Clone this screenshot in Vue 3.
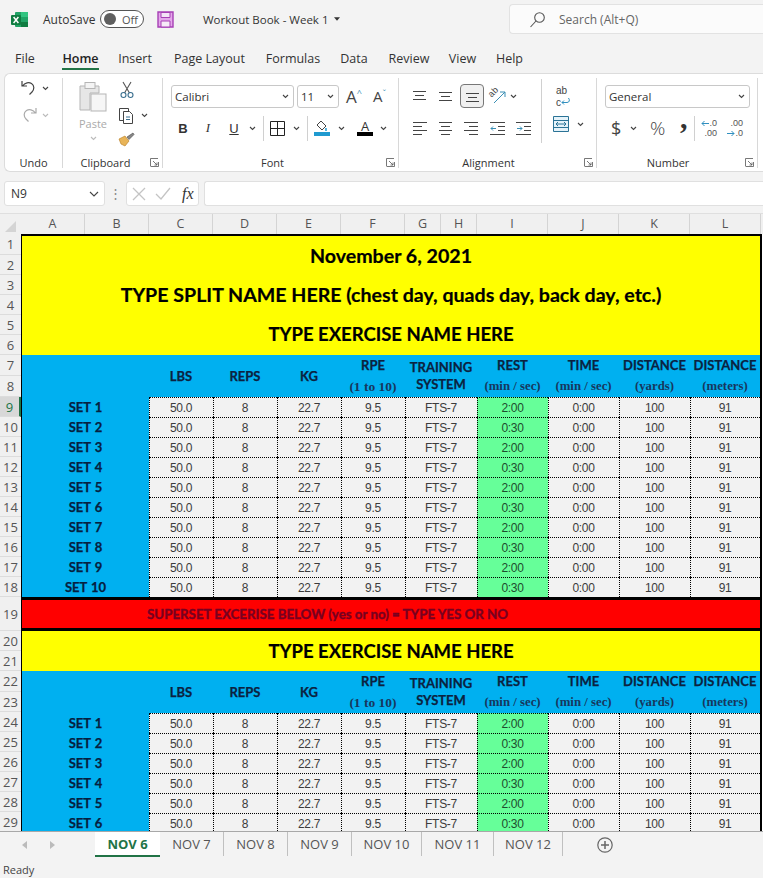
<script setup>
const menus = [
  { t: 'File', w: 46 }, { t: 'Home', w: 65, on: true }, { t: 'Insert', w: 44 }, { t: 'Page Layout', w: 105 },
  { t: 'Formulas', w: 62 }, { t: 'Data', w: 60 }, { t: 'Review', w: 50 }, { t: 'View', w: 57 }, { t: 'Help', w: 37 }
]
const cols = [
  { l: 'A', w: 64 }, { l: 'B', w: 64 }, { l: 'C', w: 64 }, { l: 'D', w: 64 }, { l: 'E', w: 64 }, { l: 'F', w: 64 },
  { l: 'G', w: 36 }, { l: 'H', w: 36 }, { l: 'I', w: 71 }, { l: 'J', w: 71 }, { l: 'K', w: 71 }, { l: 'L', w: 71 }
]
const rowHeights = [21, 20, 20, 20, 20, 20, 21, 21, 20, 20, 20, 20, 20, 20, 20, 20, 20, 20, 34, 20, 20, 21, 20, 20, 20, 20, 20, 20, 20]
const rowNums = rowHeights.map((h, i) => ({ n: i + 1, h }))
const heads = [
  { a: 'LBS' }, { a: 'REPS' }, { a: 'KG' }, { a: 'RPE', b: '(1 to 10)', wide: true }, { a: 'TRAINING', c: 'SYSTEM' },
  { a: 'REST', b: '(min / sec)' }, { a: 'TIME', b: '(min / sec)' }, { a: 'DISTANCE', b: '(yards)' }, { a: 'DISTANCE', b: '(meters)' }
]
const setsA = Array.from({ length: 10 }, (_, i) => i + 1)
const setsB = Array.from({ length: 6 }, (_, i) => i + 1)
const rest = (n) => (n % 2 ? '2:00' : '0:30')
const tabs = [
  { t: 'NOV 6', w: 65, on: true }, { t: 'NOV 7', w: 64 }, { t: 'NOV 8', w: 64 }, { t: 'NOV 9', w: 64 },
  { t: 'NOV 10', w: 70 }, { t: 'NOV 11', w: 72 }, { t: 'NOV 12', w: 69 }
]
</script>

<template>
  <div class="app">
    <header class="title">
      <svg class="xl" width="17" height="17" viewBox="0 0 17 17">
        <rect x="4" y="1" width="13" height="15" rx="1" fill="#21a366" />
        <rect x="10" y="1" width="7" height="5" fill="#33c481" />
        <rect x="10" y="11" width="7" height="5" fill="#107c41" />
        <rect x="0" y="4" width="10" height="10" rx="1" fill="#107c41" />
        <path d="M2.6 6l4.8 6M7.4 6l-4.8 6" stroke="#fff" stroke-width="1.5" />
      </svg>
      <span class="autosave">AutoSave</span>
      <span class="toggle"><i></i><b>Off</b></span>
      <svg class="save" width="17" height="17" viewBox="0 0 17 17">
        <path d="M1 1h15v15H1z" fill="#e4a7ea" stroke="#a63fb5" stroke-width="1.4" />
        <path d="M4 1.5h9v5H4z" fill="#f4e3f6" stroke="#a63fb5" />
        <path d="M4 10h9v6H4z" fill="#f6eaf7" stroke="#a63fb5" />
      </svg>
      <span class="doc">Workout Book - Week 1</span>
      <svg class="doc-caret" width="7" height="4" viewBox="0 0 7 4"><path d="M0 0h7L3.5 4z" fill="#333" /></svg>
      <div class="search">
        <svg width="17" height="17" viewBox="0 0 17 17" fill="none" stroke="#555" stroke-width="1.1">
          <circle cx="10.5" cy="6.5" r="4.8" /><path d="M7 10l-5.5 6" />
        </svg>
        <span>Search (Alt+Q)</span>
      </div>
    </header>

    <nav class="menu">
      <span v-for="m in menus" :key="m.t" class="menu-item" :class="{ on: m.on }" :style="{ width: m.w + 'px' }"><em>{{ m.t }}</em></span>
    </nav>

    <section class="ribbon">
      <div class="group g-undo">
        <div class="g-body col-tight">
          <div class="icon-row">
            <svg width="20" height="20" viewBox="0 0 20 20" fill="none" stroke="#444" stroke-width="1.2">
              <path d="M3 3v5h5M3.5 8C6 4.5 10 4 12.5 5.5c3 2 3 6 .5 8.5l-2.5 2.5" />
            </svg>
            <svg class="chev" width="7" height="5" viewBox="0 0 7 5"><path d="M1 1l2.5 2.5L6 1" /></svg>
          </div>
          <div class="icon-row faded">
            <svg width="20" height="20" viewBox="0 0 20 20" fill="none" stroke="#aaa" stroke-width="1.2">
              <path d="M17 3v5h-5M16.5 8C14 4.5 10 4 7.5 5.5c-3 2-3 6-.5 8.5l2.500 2.500" />
            </svg>
            <svg class="chev lite" width="7" height="5" viewBox="0 0 7 5"><path d="M1 1l2.500 2.500L6 1" /></svg>
          </div>
        </div>
        <div class="g-label"><span>Undo</span></div>
      </div>

      <div class="group g-clip">
        <div class="g-body clip-body">
          <div class="paste">
            <svg width="30" height="32" viewBox="0 0 30 32" fill="none" stroke="#b5b5b5">
              <path d="M2 5h19v7h-9v17H2z" fill="#e6e6e6" />
              <rect x="7" y="1.500" width="10" height="6" fill="#f4f4f4" />
              <rect x="13" y="13" width="15" height="17" fill="#f6f6f6" />
            </svg>
            <span>Paste</span>
            <svg class="chev lite" width="7" height="5" viewBox="0 0 7 5"><path d="M1 1l2.500 2.500L6 1" /></svg>
          </div>
          <div class="clip-tools">
            <svg width="14" height="18" viewBox="0 0 14 18" fill="none" stroke="#3a6f8f" stroke-width="1.100">
              <path d="M3 1l6.500 11M11 1L4.500 12" stroke="#555" />
              <circle cx="3.500" cy="14" r="2.500" /><circle cx="10.500" cy="14" r="2.500" />
            </svg>
            <div class="icon-row copy">
              <svg width="17" height="17" viewBox="0 0 17 17" fill="#fff" stroke="#444">
                <path d="M1.500 1.500h9v12h-9z" /><path d="M5.500 4.500h6l3 3v9h-9z" />
                <path d="M8 10h4M8 12.500h4" stroke="#3a6f8f" />
              </svg>
              <svg class="chev" width="7" height="5" viewBox="0 0 7 5"><path d="M1 1l2.500 2.500L6 1" /></svg>
            </div>
            <svg width="17" height="15" viewBox="0 0 17 15">
              <path d="M1 7l6-3 4 5-4 5-4-2z" fill="#e8b458" stroke="#b57a20" stroke-width=".6" />
              <path d="M9 5l6-4 1 1.500-5 5z" fill="#888" stroke="#444" stroke-width=".6" />
            </svg>
          </div>
        </div>
        <div class="g-label pr14"><span>Clipboard</span><svg class="launch" width="9" height="9" viewBox="0 0 9 9"><path d="M.5 8V.5H8M.5 8.500H8.500V4M3 3l4 4M7 4.500V7H4.500" /></svg></div>
      </div>

      <div class="group g-font">
        <div class="g-body rows">
          <div class="row r1">
            <div class="select s-font"><span>Calibri</span><svg class="chev" width="7" height="5" viewBox="0 0 7 5"><path d="M1 1l2.500 2.500L6 1" /></svg></div>
            <div class="select s-size"><span>11</span><svg class="chev" width="7" height="5" viewBox="0 0 7 5"><path d="M1 1l2.500 2.500L6 1" /></svg></div>
            <span class="grow-a big">A<sup>^</sup></span>
            <span class="grow-a small">A<sup>ˇ</sup></span>
          </div>
          <div class="row r2">
            <span class="fmt b">B</span>
            <span class="fmt i">I</span>
            <span class="fmt u">U</span>
            <svg class="chev c1" width="7" height="5" viewBox="0 0 7 5"><path d="M1 1l2.500 2.500L6 1" /></svg>
            <i class="vsep s1"></i>
            <svg class="bord" width="15" height="15" viewBox="0 0 15 15" fill="none" stroke="#222"><path d="M.5.500h14v14H.500zM7.500.500v14M.500 7.500h14" /></svg>
            <svg class="chev c2" width="7" height="5" viewBox="0 0 7 5"><path d="M1 1l2.500 2.500L6 1" /></svg>
            <i class="vsep s2"></i>
            <div class="fill">
              <svg width="16" height="12" viewBox="0 0 16 12" fill="none" stroke="#444">
                <path d="M7 1l5 5-4 4-5-5z" /><path d="M12 8v3" stroke="#1f9ad0" stroke-width="1.500" />
              </svg>
              <i class="bar blue"></i>
            </div>
            <svg class="chev c3" width="7" height="5" viewBox="0 0 7 5"><path d="M1 1l2.500 2.500L6 1" /></svg>
            <div class="fcolor"><span>A</span><i class="bar black"></i></div>
            <svg class="chev c4" width="7" height="5" viewBox="0 0 7 5"><path d="M1 1l2.500 2.500L6 1" /></svg>
          </div>
        </div>
        <div class="g-label pr16"><span>Font</span><svg class="launch" width="9" height="9" viewBox="0 0 9 9"><path d="M.5 8V.5H8M.5 8.500H8.500V4M3 3l4 4M7 4.500V7H4.500" /></svg></div>
      </div>

      <div class="group g-align">
        <div class="g-body align-body">
          <div class="align-left">
            <div class="row a1">
              <svg class="al" width="15" height="13" viewBox="0 0 15 13"><path d="M1 1.500h13M3 5.500h9M1 9.500h13" /></svg>
              <svg class="al" width="15" height="13" viewBox="0 0 15 13"><path d="M1 2.500h13M3 6.500h9M1 10.500h13" /></svg>
              <span class="selbox"><svg class="al" width="15" height="13" viewBox="0 0 15 13"><path d="M1 3.500h13M3 7.500h9M1 11.500h13" /></svg></span>
              <span class="orient-wrap">
                <svg width="17" height="16" viewBox="0 0 17 16" fill="none" stroke="#3a8fb5"><path d="M5 15L16 4M11 4h5v5" /></svg>
                <span class="orient-ab">ab</span>
              </span>
              <svg class="chev" width="7" height="5" viewBox="0 0 7 5"><path d="M1 1l2.500 2.500L6 1" /></svg>
            </div>
            <div class="row a2">
              <svg class="al" width="15" height="13" viewBox="0 0 15 13"><path d="M1 .500h14M1 4.500h9M1 8.500h14M1 12.500h9" /></svg>
              <svg class="al" width="15" height="13" viewBox="0 0 15 13"><path d="M1 .500h13M3 4.500h9M1 8.500h13M3 12.500h9" /></svg>
              <svg class="al" width="15" height="13" viewBox="0 0 15 13"><path d="M0 .500h14M5 4.500h9M0 8.500h14M5 12.500h9" /></svg>
              <svg class="al" width="15" height="13" viewBox="0 0 15 13"><path d="M0 .500h15M8 4.500h7M8 8.500h7M0 12.500h15" /><path d="M6 6.500H1M3 4.500l-2 2 2 2" stroke="#3a8fb5" fill="none" /></svg>
              <svg class="al" width="15" height="13" viewBox="0 0 15 13"><path d="M0 .500h15M8 4.500h7M8 8.500h7M0 12.500h15" /><path d="M1 6.500h5M4 4.500l2 2-2 2" stroke="#3a8fb5" fill="none" /></svg>
            </div>
          </div>
          <i class="vsep tall"></i>
          <div class="align-right">
            <div class="wrap"><span>ab</span><span class="wrap-c">c<svg width="9" height="8" viewBox="0 0 9 8" fill="none" stroke="#2f8fbf"><path d="M7.500 0c1.500 2 1 4.500-1.500 4.500H1M3 2.500L1 4.500l2 2" /></svg></span></div>
            <div class="row merge">
              <svg width="16" height="16" viewBox="0 0 16 16" fill="#e5f3fa" stroke="#2b7396"><path d="M.500.500h15v15H.500zM.500 4.500h15M.500 11.500h15" /><path d="M3 8h10M5 6L3 8l2 2M11 6l2 2-2 2" fill="none" /></svg>
              <svg class="chev" width="7" height="5" viewBox="0 0 7 5"><path d="M1 1l2.500 2.500L6 1" /></svg>
            </div>
          </div>
        </div>
        <div class="g-label pr18"><span>Alignment</span><svg class="launch" width="9" height="9" viewBox="0 0 9 9"><path d="M.5 8V.5H8M.5 8.500H8.500V4M3 3l4 4M7 4.500V7H4.500" /></svg></div>
      </div>

      <div class="group g-num">
        <div class="g-body rows">
          <div class="row r1">
            <div class="select s-num"><span>General</span><svg class="chev" width="7" height="5" viewBox="0 0 7 5"><path d="M1 1l2.500 2.500L6 1" /></svg></div>
          </div>
          <div class="row n2">
            <span class="dollar">$</span>
            <svg class="chev" width="7" height="5" viewBox="0 0 7 5"><path d="M1 1l2.500 2.500L6 1" /></svg>
            <span class="pct">%</span>
            <span class="comma">,</span>
            <i class="vsep"></i>
            <span class="dec"><span><svg width="8" height="7" viewBox="0 0 8 7" fill="none" stroke="#2f8fbf"><path d="M8 3.500H1M3.500 1L1 3.500 3.500 6" /></svg>.0</span><span>.00</span></span>
            <span class="dec d2"><span>.00</span><span><svg width="8" height="7" viewBox="0 0 8 7" fill="none" stroke="#2f8fbf"><path d="M0 3.500h7M4.500 1L7 3.500 4.500 6" /></svg>.0</span></span>
          </div>
        </div>
        <div class="g-label pr18"><span>Number</span><svg class="launch" width="9" height="9" viewBox="0 0 9 9"><path d="M.5 8V.5H8M.5 8.500H8.500V4M3 3l4 4M7 4.500V7H4.500" /></svg></div>
      </div>
    </section>

    <section class="fbar">
      <div class="namebox"><span>N9</span><svg class="chev" width="10" height="6" viewBox="0 0 10 6"><path d="M1 1l4 4 4-4" /></svg></div>
      <span class="dots">⋮</span>
      <div class="fbtns">
        <svg width="14" height="14" viewBox="0 0 14 14" stroke="#c4c4c4" stroke-width="1.300"><path d="M1 1l12 12M13 1L1 13" /></svg>
        <svg width="16" height="13" viewBox="0 0 16 13" fill="none" stroke="#c4c4c4" stroke-width="1.300"><path d="M1 7l5 5L15 1" /></svg>
        <span class="fx">fx</span>
      </div>
      <div class="finput"></div>
    </section>

    <div class="colheads">
      <div class="corner"><svg width="11" height="11" viewBox="0 0 11 11"><path d="M11 0v11H0z" fill="#d4d4d4" /></svg></div>
      <span v-for="c in cols" :key="c.l" class="colhead" :style="{ width: c.w + 'px' }">{{ c.l }}</span>
    </div>

    <div class="grid-wrap">
      <div class="rownums">
        <span v-for="r in rowNums" :key="r.n" class="rownum" :class="{ cur: r.n === 9 }" :style="{ height: r.h + 'px' }">{{ r.n }}</span>
      </div>
      <div class="sheet">
        <div class="banner">
          <div class="b1 big-line">November 6, 2021</div>
          <div class="b1 big-line">TYPE SPLIT NAME HERE (chest day, quads day, back day, etc.)</div>
          <div class="b1">TYPE EXERCISE NAME HERE</div>
        </div>
        <div class="thead">
          <div class="th-blank"></div>
          <div v-for="(h, i) in heads" :key="i" class="th" :class="{ stack: h.c, pair: h.b }">
            <span class="tha">{{ h.a }}</span>
            <span v-if="h.b" class="thb" :class="{ wide: h.wide }">{{ h.b }}</span>
            <span v-if="h.c" class="tha">{{ h.c }}</span>
          </div>
        </div>
        <div v-for="n in setsA" :key="'a' + n" class="tr">
          <div class="setname">SET {{ n }}</div>
          <div class="td">50.0</div><div class="td">8</div><div class="td">22.7</div><div class="td">9.5</div><div class="td">FTS-7</div>
          <div class="td rest">{{ rest(n) }}</div><div class="td">0:00</div><div class="td">100</div><div class="td">91</div>
        </div>
        <div class="redbar"><span>SUPERSET EXCERISE BELOW (yes or no) = TYPE YES OR NO</span></div>
        <div class="banner2">TYPE EXERCISE NAME HERE</div>
        <div class="thead">
          <div class="th-blank"></div>
          <div v-for="(h, i) in heads" :key="i" class="th" :class="{ stack: h.c, pair: h.b }">
            <span class="tha">{{ h.a }}</span>
            <span v-if="h.b" class="thb" :class="{ wide: h.wide }">{{ h.b }}</span>
            <span v-if="h.c" class="tha">{{ h.c }}</span>
          </div>
        </div>
        <div v-for="n in setsB" :key="'b' + n" class="tr">
          <div class="setname">SET {{ n }}</div>
          <div class="td">50.0</div><div class="td">8</div><div class="td">22.7</div><div class="td">9.5</div><div class="td">FTS-7</div>
          <div class="td rest">{{ rest(n) }}</div><div class="td">0:00</div><div class="td">100</div><div class="td">91</div>
        </div>
      </div>
    </div>

    <div class="tabbar">
      <div class="tab-nav">
        <svg width="5" height="8" viewBox="0 0 5 8"><path d="M5 0v8L0 4z" fill="#bbb" /></svg>
        <svg width="5" height="8" viewBox="0 0 5 8"><path d="M0 0v8l5-4z" fill="#bbb" /></svg>
      </div>
      <span v-for="t in tabs" :key="t.t" class="tab" :class="{ on: t.on }" :style="{ width: t.w + 'px' }">{{ t.t }}</span>
      <svg class="plus" width="16" height="16" viewBox="0 0 16 16" fill="none" stroke="#666" stroke-width="1.200">
        <circle cx="8" cy="8" r="7.200" /><path d="M8 4v8M4 8h8" stroke-width="1.500" />
      </svg>
    </div>
    <footer class="status">Ready</footer>
  </div>
</template>

<style>
html, body { margin: 0; background: #f3f3f3; overflow: hidden; }
</style>

<style scoped>
.app {
  width: 763px; height: 878px; overflow: hidden; background: #f3f3f3;
  display: flex; flex-direction: column;
  font-family: "Open Sans", "Noto Sans", sans-serif; color: #333;
}
svg { display: block; flex: none; }
.chev { fill: none; stroke: #444; stroke-width: 1.1; }
.chev.lite { stroke: #bbb; }
.title { height: 40px; flex: none; display: flex; align-items: center; padding-bottom: 2px; box-sizing: border-box; }
.xl { margin-left: 11px; }
.autosave { margin-left: 15px; font-size: 12px; width: 57px; color: #333; }
.toggle {
  width: 44px; height: 18px; border: 1px solid #555; border-radius: 10px; display: flex; align-items: center;
  background: #fff; box-sizing: border-box;
}
.toggle i { width: 12px; height: 12px; background: #5f5f5f; border-radius: 50%; margin-left: 3px; }
.toggle b { font-weight: 400; font-size: 11px; margin-left: 6px; color: #555; }
.save { margin-left: 13px; }
.doc { margin-left: 29px; font-size: 11.5px; width: 131px; white-space: nowrap; }
.doc-caret { margin-left: 0; width: 6px; }
.search {
  margin-left: auto; width: 254px; height: 30px; background: #fbfbfb; border: 1px solid #e2e2e2;
  border-right: 0; border-radius: 4px 0 0 4px; display: flex; align-items: center; box-sizing: border-box;
  padding-left: 19px; gap: 13px; font-size: 12px; color: #666;
}
.menu { height: 33px; flex: none; display: flex; align-items: center; padding: 3px 0 0 2px; box-sizing: border-box; }
.menu-item { font-size: 12.5px; text-align: center; position: relative; color: #333; flex: none; white-space: nowrap; }
.menu-item em { font-style: normal; }
.menu-item.on { color: #222; font-weight: 600; }
.menu-item.on::after {
  content: ""; position: absolute; left: 14px; right: 14px; top: 18px; height: 2px; background: #217346;
}
.ribbon {
  height: 99px; flex: none; margin-left: 4px; background: #fff; border: 1px solid #dcdcdc; border-right: 0;
  border-radius: 6px 0 0 6px; display: flex; box-sizing: border-box;
}
.group { display: flex; flex-direction: column; flex: none; box-sizing: border-box; border-right: 1px solid #d8d8d8; margin: 4px 0 3px; }
.g-body { flex: 1; min-height: 0; }
.g-label { height: 18px; display: flex; justify-content: center; align-items: center; font-size: 11px; position: relative; color: #333; box-sizing: border-box; }
.g-label > span { position: relative; top: 3px; }
.pr14 { padding-right: 14px; }
.pr16 { padding-right: 16px; }
.pr18 { padding-right: 18px; }
.launch { position: absolute; right: 3px; top: 8px; fill: none; stroke: #555; stroke-width: .8; }
.g-undo { width: 58px; }
.col-tight { padding: 0 0 0 14px; display: flex; flex-direction: column; gap: 7px; }
.icon-row { display: flex; align-items: center; gap: 3px; }
.g-clip { width: 100px; }
.clip-body { display: flex; padding: 3px 0 0 16px; }
.paste { width: 28px; display: flex; flex-direction: column; align-items: center; font-size: 11px; color: #aaa; }
.paste span { margin-top: 3px; }
.paste .chev { margin-top: 5px; }
.clip-tools { margin-left: 9px; display: flex; flex-direction: column; gap: 8px; padding-left: 2px; }
.clip-tools > svg:first-child { margin-left: 2px; }
.copy { gap: 6px; }
.g-font { width: 236px; }
.rows { display: flex; flex-direction: column; }
.row { display: flex; align-items: center; }
.r1 { height: 24px; margin-top: 6px; }
.select {
  height: 23px; border: 1px solid #c8c8c8; border-radius: 3px; box-sizing: border-box; display: flex; align-items: center;
  justify-content: space-between; padding: 0 4px 0 3px; font-size: 11.5px; color: #333; background: #fff;
}
.s-font { width: 123px; margin-left: 8px; }
.s-size { width: 42px; margin-left: 3px; }
.grow-a { color: #444; line-height: 1; display: flex; align-items: flex-start; }
.grow-a sup { font-size: 9px; line-height: 1; color: #3a8fb5; vertical-align: baseline; }
.big { font-size: 17px; margin-left: 7px; width: 22px; }
.small { font-size: 15px; margin-left: 5px; }
.r2 { height: 24px; margin-top: 8px; }
.fmt { font-family: "Liberation Sans", sans-serif; font-size: 13px; color: #333; width: 10px; text-align: center; flex: none; }
.fmt.b { font-weight: 700; margin-left: 15px; }
.fmt.i { font-style: italic; margin-left: 15px; font-family: "Liberation Serif", serif; }
.fmt.u { text-decoration: underline; margin-left: 16px; }
.c1 { margin-left: 10px; }
.vsep { display: block; width: 1px; height: 25px; background: #d0d0d0; flex: none; }
.s1 { margin-left: 7px; }
.bord { margin-left: 6px; }
.c2 { margin-left: 8px; }
.s2 { margin-left: 7px; }
.fill { margin-left: 6px; width: 16px; display: flex; flex-direction: column; }
.bar { display: block; height: 4px; width: 16px; }
.bar.blue { background: #1f9ad0; }
.bar.black { background: #000; }
.c3 { margin-left: 8px; }
.fcolor { margin-left: 12px; width: 16px; display: flex; flex-direction: column; align-items: center; font-size: 13px; line-height: 12px; color: #333; }
.c4 { margin-left: 7px; }
.g-align { width: 198px; }
.align-body { display: flex; }
.align-left { width: 142px; padding-left: 13px; box-sizing: border-box; }
.a1 { height: 24px; margin-top: 6px; }
.a2 { height: 24px; margin-top: 8px; gap: 11px; }
.al { fill: none; stroke: #444; stroke-width: 1; }
.a1 > .al:nth-child(1) { margin-right: 11px; }
.a1 > .al:nth-child(2) { margin-right: 7px; }
.selbox {
  width: 24px; height: 24px; box-sizing: border-box; border: 1px solid #777; border-radius: 4px; background: #f0f0f0;
  display: flex; align-items: center; justify-content: center;
}
.orient-wrap { margin-left: 5px; position: relative; width: 17px; height: 16px; display: block; }
.orient-ab {
  position: absolute; left: -1px; top: -1px; font-family: "Liberation Sans", sans-serif; font-size: 9px; line-height: 10px;
  color: #444; transform: rotate(-45deg);
}
.a1 > .chev { margin-left: 4px; }
.tall { height: 64px; margin-top: 1px; }
.align-right { padding-left: 11px; }
.wrap {
  margin-top: 5px; height: 26px; width: 20px; font-size: 10px; line-height: 11.5px; display: flex; flex-direction: column;
  color: #444; margin-left: 3px; padding-top: 2px; box-sizing: border-box; font-family: "Liberation Sans", sans-serif;
}
.wrap-c { display: flex; align-items: center; }
.merge { margin-top: 7px; gap: 8px; }
.g-num { width: 161px; }
.s-num { width: 145px; margin-left: 8px; }
.n2 { height: 24px; margin-top: 8px; }
.dollar { font-size: 18px; margin-left: 14px; width: 10px; color: #444; }
.n2 > .chev { margin-left: 9px; }
.pct { font-size: 19px; margin-left: 13px; width: 17px; color: #444; font-weight: 300; }
.comma { font-family: "Liberation Serif", serif; font-size: 30px; font-weight: 700; margin-left: 13px; width: 8px; line-height: 24px; color: #333; height: 24px; position: relative; top: -10px; }
.n2 > .vsep { margin-left: 6px; }
.dec { margin-left: 6px; width: 16px; font-size: 9px; line-height: 10px; color: #555; display: flex; flex-direction: column; align-items: flex-end; font-family: "Liberation Sans", sans-serif; }
.dec > span { display: flex; align-items: center; }
.d2 { margin-left: 10px; }
.fbar { height: 26px; flex: none; margin-top: 9px; display: flex; }
.namebox {
  width: 101px; margin-left: 4px; height: 25px; background: #fff; border: 1px solid #e0e0e0; border-radius: 3px;
  box-sizing: border-box; display: flex; align-items: center; justify-content: space-between; padding: 0 5px 0 6px; font-size: 12px;
}
.dots { width: 21px; text-align: center; color: #888; font-size: 13px; line-height: 24px; }
.fbtns {
  width: 73px; height: 25px; background: #fff; border: 1px solid #e0e0e0; border-radius: 3px; box-sizing: border-box;
  display: flex; align-items: center; padding-left: 5px; gap: 9px;
}
.fx { font-family: "Liberation Serif", serif; font-style: italic; font-size: 16px; color: #333; margin-left: 2px; }
.finput { flex: 1; height: 25px; background: #fff; margin-left: 5px; border: 1px solid #e0e0e0; border-right: 0; border-radius: 3px 0 0 3px; box-sizing: border-box; }
.colheads { height: 27px; flex: none; display: flex; box-sizing: border-box; padding-top: 7px; background: linear-gradient(#f3f3f3 0 6px, #dfdfdf 6px 7px, #f0f0f0 7px); }
.corner { width: 21px; display: flex; align-items: flex-end; justify-content: center; padding-bottom: 2px; box-sizing: border-box; flex: none; }
.colhead { flex: none; box-sizing: border-box; border-right: 1px solid #d4d4d4; text-align: center; font-size: 12.5px; line-height: 20px; color: #555; }
.grid-wrap { height: 597px; flex: none; display: flex; overflow: hidden; background: #fff; }
.rownums { width: 21px; flex: none; background: #f0f0f0; }
.rownum {
  display: flex; align-items: center; justify-content: center; box-sizing: border-box; border-bottom: 1px solid #dcdcdc;
  font-size: 13px; color: #555;
}
.rownum.cur { background: #d8d8d8; color: #217346; border-right: 2px solid #217346; }
.sheet { width: 741px; flex: none; box-sizing: border-box; border-left: 1px solid #000; border-right: 2px solid #000; height: 597px; overflow: hidden; }
.banner { height: 121px; background: #ff0; border-top: 2px solid #000; box-sizing: border-box; display: flex; flex-direction: column; padding-bottom: 1px; }
.b1 { height: 40px; display: flex; align-items: center; justify-content: center; font-family: Lato, sans-serif; font-weight: 700; font-size: 18.5px; color: #000; white-space: nowrap; -webkit-text-stroke: .2px #000; }
.b1:first-child { height: 38px; }
.b1.big-line { font-size: 19.6px; }
.thead { height: 42px; display: grid; grid-template-columns: 127px repeat(4, 64px) 72px 71px 71px 71px 70px; background: #00b0f0; }
.th {
  display: flex; flex-direction: column; align-items: center; justify-content: center; font-family: Lato, sans-serif;
  color: #0b2240; font-weight: 700; font-size: 13px; white-space: nowrap; line-height: 1; -webkit-text-stroke: .25px #0b2240;
}
.th.pair { line-height: 21px; }
.th.stack { line-height: 17px; }
.thb { font-family: "Liberation Serif", serif; font-size: 12.8px; color: #17375e; -webkit-text-stroke: 0; }
.thb.wide { font-size: 13.5px; }
.tr { height: 20px; display: grid; grid-template-columns: 127px repeat(4, 64px) 72px 71px 71px 71px 70px; }
.setname {
  background: #00b0f0; display: flex; align-items: center; justify-content: center; font-family: Lato, sans-serif; font-weight: 700;
  font-size: 13px; color: #06203f; -webkit-text-stroke: .25px #06203f; word-spacing: 1px;
}
.td {
  background: #f2f2f2; border-top: 1px dotted #000; border-left: 1px dotted #000; box-sizing: border-box; display: flex; padding-right: 1px;
  align-items: center; justify-content: center; font-family: "Liberation Sans", sans-serif; font-size: 12px; letter-spacing: -.3px; color: #3c3c3c;
}
.td.rest { background: #66ff99; color: #1f4d2e; }
.redbar {
  height: 34px; background: #f00; border-top: 3px solid #000; border-bottom: 3px solid #000; box-sizing: border-box;
  display: flex; align-items: center; padding-left: 125px; font-family: Lato, sans-serif; font-weight: 700; font-size: 13.3px;
  color: #780020; white-space: nowrap; -webkit-text-stroke: .35px #780020;
}
.banner2 { height: 40px; background: #ff0; display: flex; align-items: center; justify-content: center; padding-bottom: 1px; box-sizing: border-box; font-family: Lato, sans-serif; font-weight: 700; font-size: 18.5px; color: #000; -webkit-text-stroke: .2px #000; }
.tabbar {
  height: 27px; flex: none; display: flex; background: #f3f3f3; border-top: 1px solid #a8a8a8; box-sizing: border-box; align-items: flex-start;
}
.tab-nav { width: 95px; flex: none; display: flex; gap: 23px; padding: 9px 0 0 22px; box-sizing: border-box; }
.tab {
  flex: none; height: 24px; box-sizing: border-box; border-right: 1px solid #c0c0c0; text-align: center; font-size: 13px;
  line-height: 24px; color: #555; white-space: nowrap;
}
.tab.on { background: #fff; color: #217346; font-weight: 700; border-right: 0; border-bottom: 2px solid #217346; height: 25px; }
.plus { margin: 5px 0 0 34px; }
.status { height: 20px; flex: none; font-size: 11px; line-height: 24px; padding-left: 3px; color: #444; background: #f3f3f3; }
</style>
